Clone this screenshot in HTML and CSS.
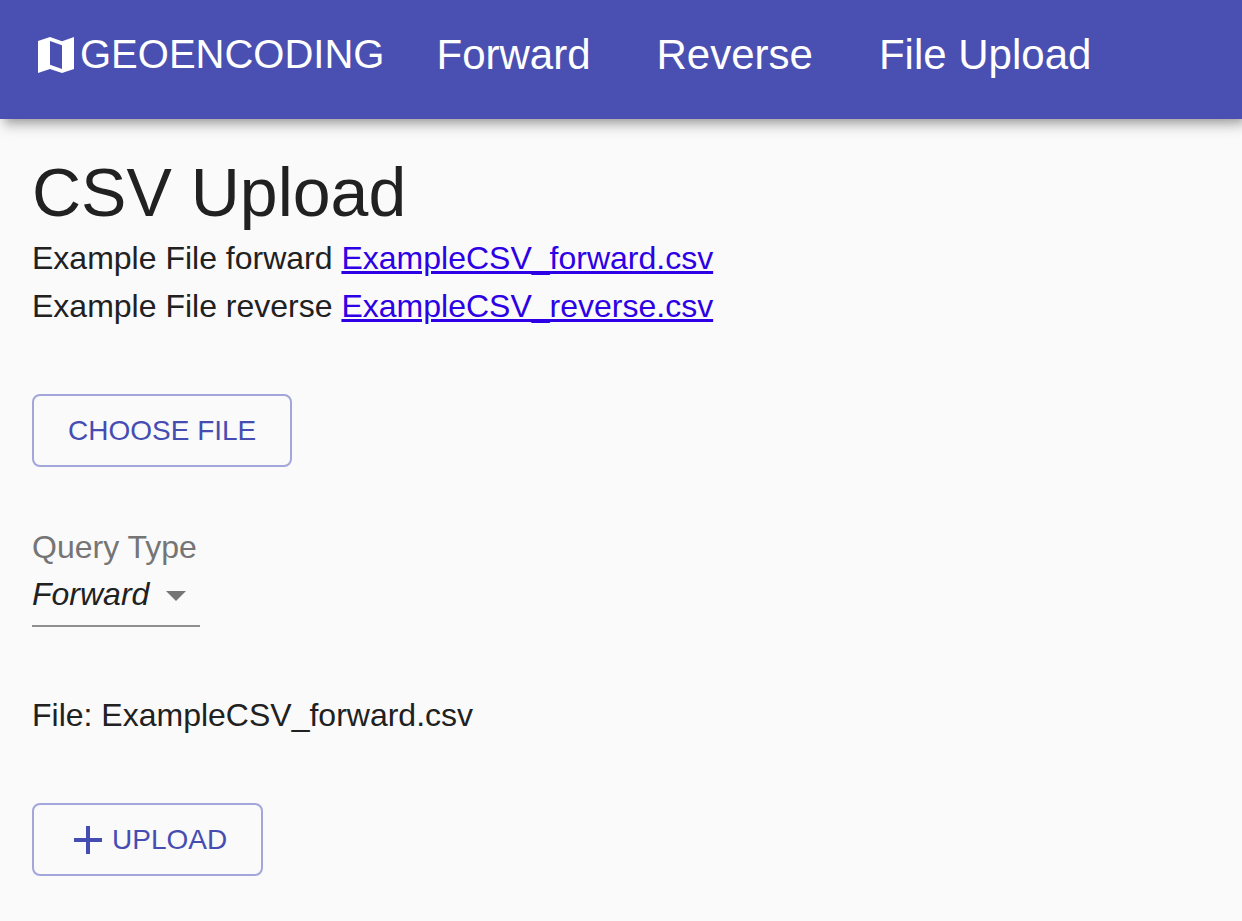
FILE: index.html
```html
<!DOCTYPE html>
<html lang="en">
<head>
<meta charset="utf-8">
<meta name="viewport" content="width=device-width, initial-scale=1">
<title>CSV Upload - Geoencoding</title>
<link rel="stylesheet" href="styles.css">
</head>
<body>
<header class="app-bar">
  <a class="brand" href="#">
    <svg class="brand-icon" viewBox="0 0 24 24" aria-hidden="true"><path fill-rule="evenodd" d="M3 5l6-2 6 2.100 6-2.100v16l-6 2-6-2-6 2zM9 5v11.900l6 2.100V7.100z"/></svg>
    <span>GEOENCODING</span>
  </a>
  <nav class="nav">
    <a href="#">Forward</a>
    <a href="#">Reverse</a>
    <a href="#">File Upload</a>
  </nav>
</header>
<main class="page">
  <section>
    <h1 class="title">CSV Upload</h1>
    <p class="text">Example File forward <a class="link" href="#">ExampleCSV_forward.csv</a></p>
    <p class="text">Example File reverse <a class="link" href="#">ExampleCSV_reverse.csv</a></p>
  </section>
  <button class="button" type="button">CHOOSE FILE</button>
  <div class="field">
    <label class="label" for="query-type">Query Type</label>
    <div class="select-wrap">
      <select class="select" id="query-type">
        <option>Forward</option>
        <option>Reverse</option>
      </select>
      <svg class="arrow" viewBox="0 0 24 24" aria-hidden="true"><path d="M7 10l5 5 5-5z"/></svg>
    </div>
  </div>
  <p class="text">File: ExampleCSV_forward.csv</p>
  <button class="button button-icon" type="button">
    <svg class="plus" viewBox="0 0 24 24" aria-hidden="true"><path d="M19 13h-6v6h-2v-6H5v-2h6V5h2v6h6z"/></svg>
    UPLOAD
  </button>
</main>
</body>
</html>
```
FILE: styles.css
```css
* {
  box-sizing: border-box;
}

body {
  margin: 0;
  background: #fafafa;
  color: #212121;
  font-family: "Liberation Sans", Arial, sans-serif;
  font-size: 32px;
  line-height: 48px;
}

.app-bar {
  display: flex;
  align-items: center;
  gap: 52px;
  padding: 23px 32px 33px;
  background: #4a50b1;
  color: #fff;
  box-shadow: 4px 4px 8px -2px rgba(0, 0, 0, 0.2), 4px 8px 10px rgba(0, 0, 0, 0.14), 0 2px 20px rgba(0, 0, 0, 0.12);
}

.app-bar a {
  color: inherit;
  text-decoration: none;
}

.brand {
  display: flex;
  align-items: center;
  font-size: 40px;
  line-height: 63px;
}

.brand-icon {
  width: 48px;
  height: 48px;
  fill: currentColor;
}

.nav {
  display: flex;
  gap: 66px;
  font-size: 42px;
  line-height: 63px;
}

.page {
  display: flex;
  flex-direction: column;
  align-items: flex-start;
  gap: 64px;
  padding: 31px 32px 45px;
}

.title {
  margin: 0;
  font-size: 68px;
  font-weight: 400;
  line-height: 84px;
}

.text {
  margin: 0;
}

.link {
  color: #2d00e6;
}

.button {
  display: flex;
  align-items: center;
  padding: 10px 34px;
  border: 2px solid #a2a6da;
  border-radius: 8px;
  background: transparent;
  color: #464db2;
  font-family: inherit;
  font-size: 28px;
  line-height: 49px;
}

.button-icon {
  padding-left: 30px;
}

.plus {
  width: 48px;
  height: 48px;
  fill: currentColor;
}

.field {
  display: flex;
  flex-direction: column;
}

.label {
  color: #757575;
  line-height: 32px;
}

.select-wrap {
  position: relative;
}

.select {
  display: block;
  width: 100%;
  padding: 12px 48px 12px 0;
  border: 0;
  border-bottom: 2px solid #8f8f8f;
  border-radius: 0;
  appearance: none;
  background: transparent;
  color: #212121;
  font: italic 32px/38px "Liberation Sans", Arial, sans-serif;
}

.arrow {
  position: absolute;
  top: 8px;
  right: 0;
  width: 48px;
  height: 48px;
  fill: #757575;
  pointer-events: none;
}
```
